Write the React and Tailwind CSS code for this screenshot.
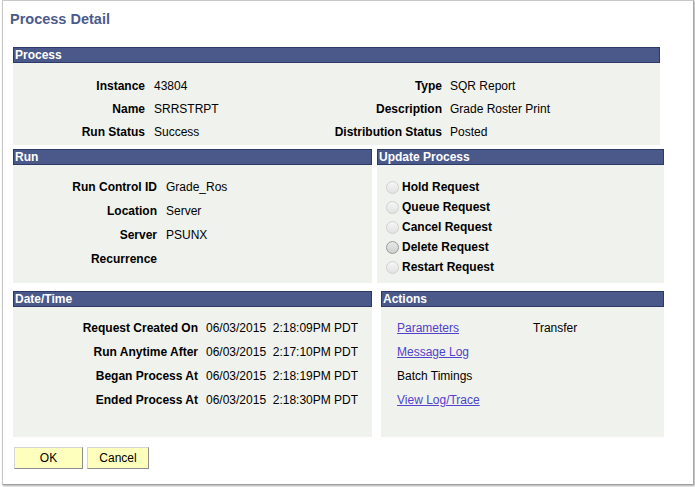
import React from "react";

const font = { fontFamily: '"Liberation Sans", Arial, sans-serif' };

function Header({ children }) {
  return (
    <div className="h-[16px] bg-[#4a598a] border border-[#2e3a66] text-white font-bold text-[12px] leading-[14px] pl-[1px]">
      {children}
    </div>
  );
}

function Radio({ dark, label }) {
  return (
    <div className="h-[20px] flex items-center">
      <div
        className={
          "w-[13px] h-[13px] rounded-full border bg-linear-to-b " +
          (dark
            ? "border-[#9a9a9a] from-[#e8e8e8] to-[#cfcfcf]"
            : "border-[#d0d0d0] from-[#f6f6f6] to-[#e2e2e2]")
        }
      />
      <span className="ml-[3px] font-bold text-[12px] text-black">{label}</span>
    </div>
  );
}

function Btn({ w, children }) {
  return (
    <div
      className={
        "h-[22px] flex items-center justify-center bg-[#ffffbd] border border-t-[#d4d4d4] border-l-[#d4d4d4] border-r-[#8c8c8c] border-b-[#8c8c8c] text-[12px] text-black " +
        w
      }
    >
      {children}
    </div>
  );
}

export default function App() {
  const proc = [
    ["Instance", "43804", "Type", "SQR Report"],
    ["Name", "SRRSTRPT", "Description", "Grade Roster Print"],
    ["Run Status", "Success", "Distribution Status", "Posted"],
  ];
  const run = [
    ["Run Control ID", "Grade_Ros"],
    ["Location", "Server"],
    ["Server", "PSUNX"],
    ["Recurrence", ""],
  ];
  const dt = [
    ["Request Created On", "06/03/2015\u00a0\u00a02:18:09PM PDT"],
    ["Run Anytime After", "06/03/2015\u00a0\u00a02:17:10PM PDT"],
    ["Began Process At", "06/03/2015\u00a0\u00a02:18:19PM PDT"],
    ["Ended Process At", "06/03/2015\u00a0\u00a02:18:30PM PDT"],
  ];
  const link = "text-[#5143cc] underline";
  return (
    <div className="w-[695px] h-[487px] bg-white" style={font}>
      <div className="ml-[2px] w-[692px] h-[485px] border border-[#c8c8c8] border-r-[#a8a8a8] border-b-[#a0a0a0] shadow-[1px_1px_2px_rgba(0,0,0,0.35)] bg-white">
        <div className="h-[46px] pl-[7px] pt-[10px]">
          <div className="text-[14.5px] leading-[17px] font-bold text-[#4b5a8d]">Process Detail</div>
        </div>

        <div className="ml-[10px] w-[647px]">
          <Header>Process</Header>
          <div className="bg-[#f0f2ed] h-[82px] pt-[11px]">
            {proc.map((r) => (
              <div key={r[0]} className="h-[23px] flex items-center text-[12px] text-black">
                <div className="w-[132px] text-right font-bold">{r[0]}</div>
                <div className="w-[150px] ml-[9px]">{r[1]}</div>
                <div className="w-[138px] text-right font-bold">{r[2]}</div>
                <div className="ml-[8px]">{r[3]}</div>
              </div>
            ))}
          </div>
        </div>

        <div className="flex mt-[4px] ml-[10px]">
          <div className="w-[359px]">
            <Header>Run</Header>
            <div className="bg-[#f0f2ed] h-[118px] pt-[10px]">
              {run.map((r) => (
                <div key={r[0]} className="h-[24px] flex items-center text-[12px] text-black">
                  <div className="w-[144px] text-right font-bold">{r[0]}</div>
                  <div className="ml-[9px]">{r[1]}</div>
                </div>
              ))}
            </div>
          </div>
          <div className="w-[287px] ml-[5px]">
            <Header>Update Process</Header>
            <div className="bg-[#f0f2ed] h-[118px] pt-[12px] pl-[9px]">
              <Radio label="Hold Request" />
              <Radio label="Queue Request" />
              <Radio label="Cancel Request" />
              <Radio dark label="Delete Request" />
              <Radio label="Restart Request" />
            </div>
          </div>
        </div>

        <div className="flex mt-[8px] ml-[10px]">
          <div className="w-[359px]">
            <Header>Date/Time</Header>
            <div className="bg-[#f0f2ed] h-[130px] pt-[9px]">
              {dt.map((r) => (
                <div key={r[0]} className="h-[24px] flex items-center text-[12px] text-black">
                  <div className="w-[185px] text-right font-bold">{r[0]}</div>
                  <div className="ml-[8px]">{r[1]}</div>
                </div>
              ))}
            </div>
          </div>
          <div className="w-[283px] ml-[9px]">
            <Header>Actions</Header>
            <div className="bg-[#f0f2ed] h-[130px] pt-[9px] pl-[16px] text-[12px] text-black">
              <div className="h-[24px] flex items-center">
                <span className="w-[136px]">
                  <span className={link}>Parameters</span>
                </span>
                <span>Transfer</span>
              </div>
              <div className="h-[24px] flex items-center">
                <span className={link}>Message Log</span>
              </div>
              <div className="h-[24px] flex items-center">
                <span>Batch Timings</span>
              </div>
              <div className="h-[24px] flex items-center">
                <span className={link}>View Log/Trace</span>
              </div>
            </div>
          </div>
        </div>

        <div className="flex gap-[4px] mt-[10px] ml-[11px]">
          <Btn w="w-[69px]">OK</Btn>
          <Btn w="w-[62px]">Cancel</Btn>
        </div>
      </div>
    </div>
  );
}
